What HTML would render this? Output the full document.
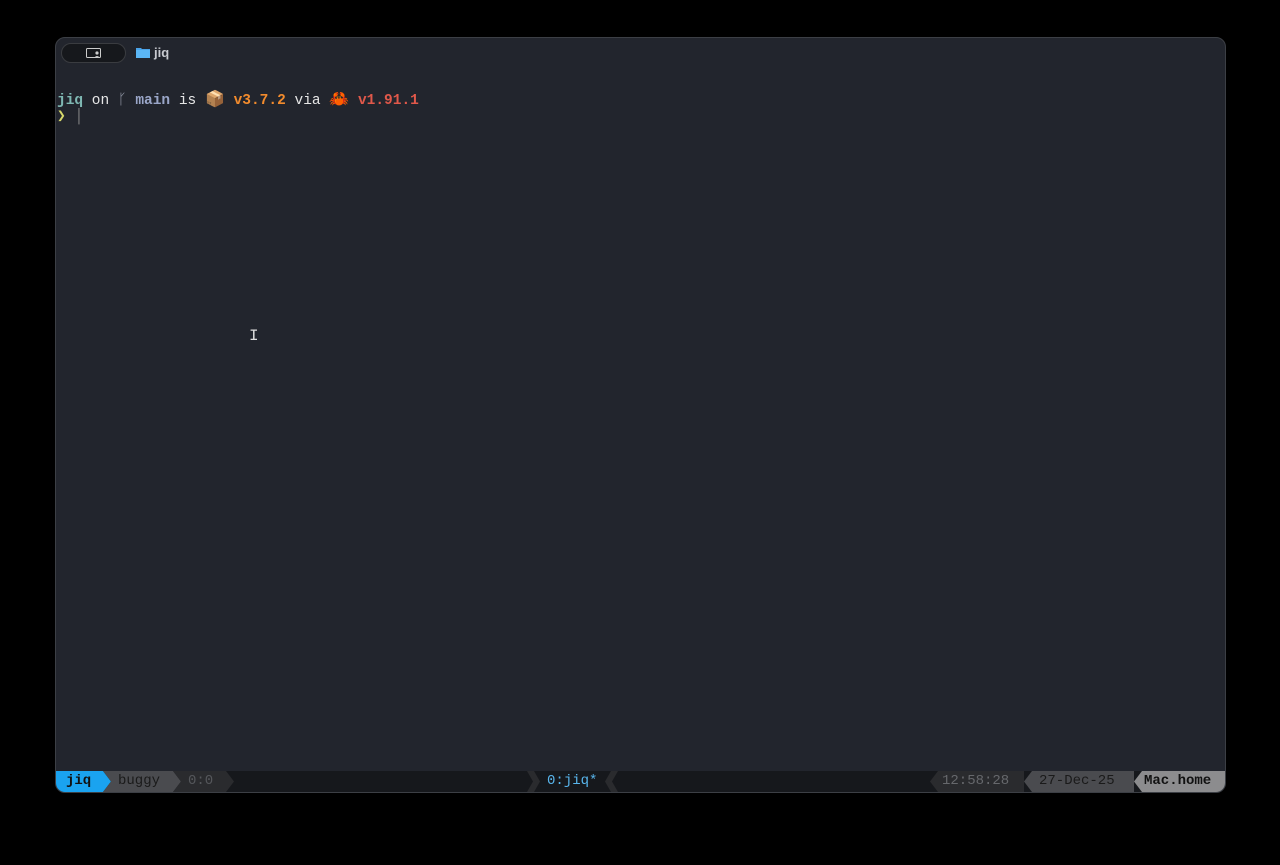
<!DOCTYPE html>
<html><head><meta charset="utf-8"><style>
html,body{margin:0;padding:0;background:#000;width:1280px;height:865px;overflow:hidden;font-family:"Liberation Mono",monospace;}
.win{position:absolute;left:55px;top:37px;width:1169px;height:754px;background:#22252d;border:1px solid #3c3f45;border-radius:10px;overflow:hidden;}
.tab{position:absolute;left:5px;top:5px;width:63px;height:18px;border-radius:10px;background:#16181c;border:1px solid #3a3c40;}
.title{position:absolute;left:80px;top:7px;color:#c8cad0;font:bold 13px "Liberation Sans",sans-serif;}
.line{position:absolute;left:1px;font-size:14.5px;white-space:pre;color:#e6e6e6;}
.sb{position:absolute;left:0;top:733px;width:1169px;height:21px;background:#16181c;font-size:14px;line-height:21px;}
.seg{position:absolute;top:0;height:21px;white-space:pre;}
</style></head><body>
<div class="win">
 <div class="tab"><svg style="position:absolute;left:24px;top:4px" width="16" height="11"><rect x="0.5" y="0.5" width="14" height="9" fill="none" stroke="#ccc" rx="1"/><circle cx="11" cy="5" r="1.6" fill="#ccc"/><path d="M8 10 Q11 6 14 10Z" fill="#ccc"/></svg></div>
 <svg style="position:absolute;left:80px;top:8px" width="14" height="12"><path d="M0 2 H5 L6 3 H14 V12 H0Z" fill="#4aa3e8"/><rect x="0" y="4" width="14" height="8" fill="#5bb6f5"/></svg>
 <div class="title" style="left:98px">jiq</div>
 <div class="line" style="top:51px"><span style="color:#7fb8b3;font-weight:bold">jiq</span> on <span style="color:#9aa0b0">ᚴ</span> <span style="color:#9aa6c8;font-weight:bold">main</span> is <span style="font-size:16px">📦</span> <span style="color:#f28b2d;font-weight:bold">v3.7.2</span> via <span style="font-size:16px">🦀</span> <span style="color:#e0584a;font-weight:bold">v1.91.1</span></div>
 <div class="line" style="top:70px"><span style="color:#d6d86a;font-weight:bold">❯</span> <span style="color:#888">│</span></div>
 <div style="position:absolute;left:193px;top:289px;color:#ddd;font-size:16px">I</div>
 <div class="sb">
  <svg style="position:absolute;left:0;top:0" width="1169" height="21">
   <polygon points="0,0 47,0 55,10.5 47,21 0,21" fill="#1aa3f0"/>
   <polygon points="47,0 117,0 125,10.5 117,21 47,21 55,10.5" fill="#4a4b4f"/>
   <polygon points="117,0 170,0 178,10.5 170,21 117,21 125,10.5" fill="#2a2b2e"/>
   <polygon points="478,0 484,10.5 478,21 471,21 477,10.5 471,0" fill="#2a2b2e"/>
   <polygon points="562,0 556,10.5 562,21 555,21 549,10.5 555,0" fill="#2a2b2e"/>
   <polygon points="882,0 968,0 968,21 882,21 874,10.5" fill="#2a2b2e"/>
   <polygon points="976,0 1078,0 1078,21 976,21 968,10.5" fill="#4a4b4f"/>
   <polygon points="1086,0 1169,0 1169,21 1086,21 1078,10.5" fill="#8c8c8e"/>
  </svg>
  <div class="seg" style="left:10px;color:#111;font-weight:bold">jiq</div>
  <div class="seg" style="left:62px;color:#1a1a1a">buggy</div>
  <div class="seg" style="left:132px;color:#55575b">0:0</div>
  <div class="seg" style="left:491px;color:#58b5ec">0:jiq*</div>
  <div class="seg" style="left:886px;color:#66686c">12:58:28</div>
  <div class="seg" style="left:983px;color:#1a1a1a">27-Dec-25</div>
  <div class="seg" style="left:1088px;color:#111;font-weight:bold">Mac.home</div>
 </div>
</div>
</body></html>
